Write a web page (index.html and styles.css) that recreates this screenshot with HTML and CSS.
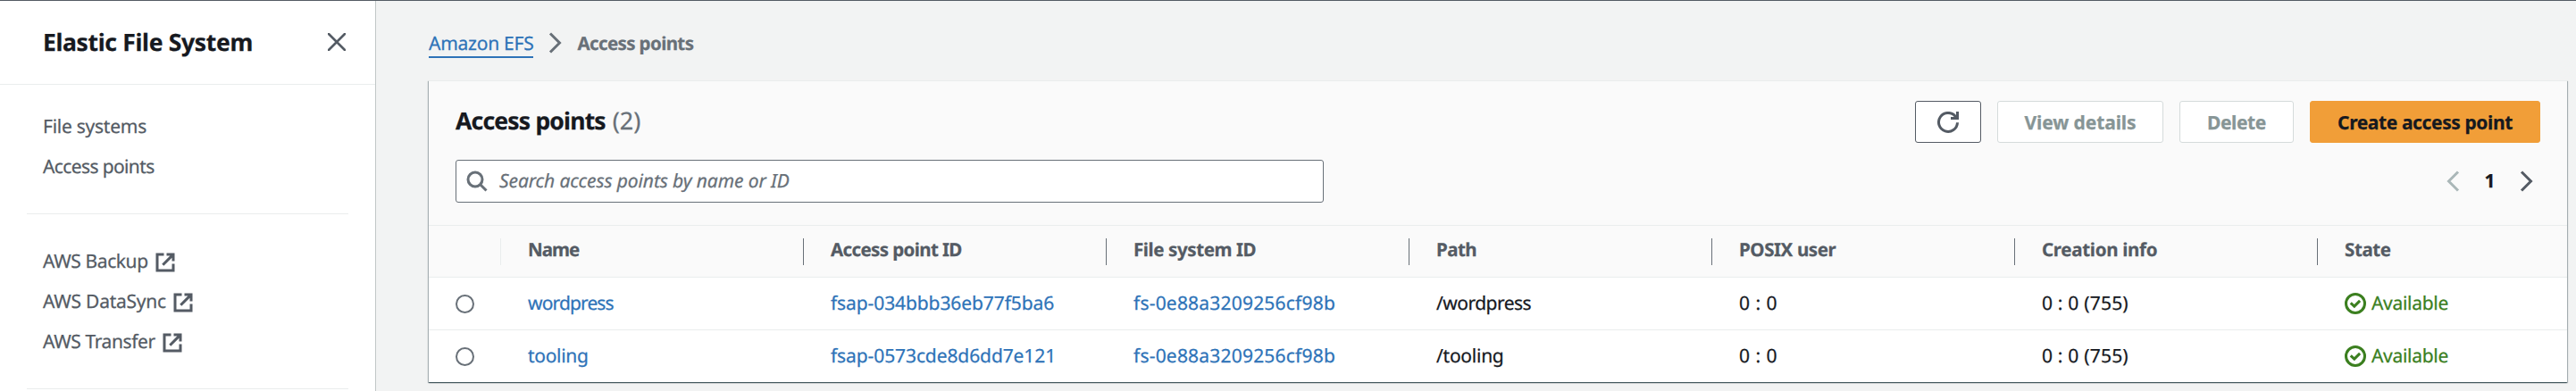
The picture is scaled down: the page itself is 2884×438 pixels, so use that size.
FILE: index.html
```
<!DOCTYPE html>
<html lang="en">
<head>
<meta charset="utf-8">
<title>Access points</title>
<link rel="stylesheet" href="styles.css">
</head>
<body>
<svg class="defs" aria-hidden="true">
  <symbol id="external" viewBox="0 0 16 16"><path d="M7 2H2v12h12V9M9 2h5v5M6.2 9.8 13.6 2.4" fill="none" stroke="currentColor" stroke-width="2"/></symbol>
  <symbol id="ok" viewBox="0 0 16 16"><circle cx="8" cy="8" r="7" fill="none" stroke="currentColor" stroke-width="2"/><path d="M4.5 7.6 7.2 10.1 11.4 5.9" fill="none" stroke="currentColor" stroke-width="2"/></symbol>
  <symbol id="chevron" viewBox="0 0 16 16"><path d="M4 1l7 7-7 7" fill="none" stroke="currentColor" stroke-width="2"/></symbol>
</svg>
<div class="app">
  <aside class="sidebar">
    <header class="side-head">
      <h2 class="side-title">Elastic File System</h2>
      <svg class="close" viewBox="0 0 20 20"><path d="M1 1l18 18M19 1L1 19" fill="none" stroke="currentColor" stroke-width="2.6" stroke-linecap="round"/></svg>
    </header>
    <nav>
      <ul class="links">
        <li><a class="n2">File systems</a></li>
        <li><a class="n6">Access points</a></li>
      </ul>
      <ul class="links ext">
        <li><a class="n4">AWS Backup</a><svg><use href="#external"/></svg></li>
        <li><a class="n2">AWS DataSync</a><svg><use href="#external"/></svg></li>
        <li><a class="n4">AWS Transfer</a><svg><use href="#external"/></svg></li>
      </ul>
    </nav>
  </aside>
  <main class="main">
    <div class="crumbs">
      <a class="n2">Amazon EFS</a>
      <svg><use href="#chevron"/></svg>
      <b class="n6">Access points</b>
    </div>
    <section class="panel">
      <div class="tools">
        <div class="row">
          <h1><span class="n8">Access points</span> <span class="count">(2)</span></h1>
          <div class="buttons">
            <button class="btn refresh" aria-label="Refresh"><svg viewBox="0 0 16 16"><path d="M15 8.2A7 7 0 1 1 13.4 3.5L15 5" fill="none" stroke="currentColor" stroke-width="2"/><path d="M15 0v5h-5" fill="none" stroke="currentColor" stroke-width="2"/></svg></button>
            <button class="btn off view n1">View details</button>
            <button class="btn off delete n4">Delete</button>
            <button class="btn primary n4">Create access point</button>
          </div>
        </div>
        <div class="row second">
          <div class="search">
            <svg viewBox="0 0 24 24"><circle cx="10" cy="10" r="8" fill="none" stroke="currentColor" stroke-width="3"/><path d="M15.5 15.5l7 7" stroke="currentColor" stroke-width="3"/></svg>
            <span class="n1">Search access points by name or ID</span>
          </div>
          <div class="pages">
            <svg class="prev"><use href="#chevron"/></svg><b>1</b><svg class="next"><use href="#chevron"/></svg>
          </div>
        </div>
      </div>
      <div class="grid head">
        <div></div><div class="n10">Name</div><div class="n6">Access point ID</div><div class="n4">File system ID</div><div class="n5">Path</div><div class="n4">POSIX user</div><div class="n3">Creation info</div><div class="n4">State</div>
      </div>
      <div class="grid body">
        <div><i class="radio"></i></div><a class="n9">wordpress</a><a class="n1">fsap-034bbb36eb77f5ba6</a><a class="p2">fs-0e88a3209256cf98b</a><div class="n5">/wordpress</div><div class="p5">0 : 0</div><div class="p2">0 : 0 (755)</div><div class="state n3"><svg><use href="#ok"/></svg>Available</div>
      </div>
      <div class="grid body">
        <div><i class="radio"></i></div><a class="n3">tooling</a><a class="n1">fsap-0573cde8d6dd7e121</a><a class="p2">fs-0e88a3209256cf98b</a><div class="n2">/tooling</div><div class="p5">0 : 0</div><div class="p2">0 : 0 (755)</div><div class="state n3"><svg><use href="#ok"/></svg>Available</div>
      </div>
    </section>
  </main>
</div>
</body>
</html>
```
FILE: styles.css
```
* { box-sizing: border-box; }
body {
  margin: 0;
  height: 438px;
  overflow: hidden;
  background: #f2f3f3;
  color: #16191f;
  font: 21px/46px "Noto Sans", sans-serif;
  text-rendering: geometricPrecision;
  -webkit-text-stroke: .25px;
}
.defs { display: none; }
h1, h2, ul { margin: 0; padding: 0; }
b, h1, h2 { font-weight: 700; }
svg { flex: none; display: block; width: 24px; height: 24px; }

/* tracking steps */
.n1 { letter-spacing: -.1px; }
.n2 { letter-spacing: -.25px; }
.n3 { letter-spacing: -.3px; }
.n4 { letter-spacing: -.4px; }
.n5 { letter-spacing: -.53px; }
.n6 { letter-spacing: -.62px; }
.n8 { letter-spacing: -.8px; }
.n9 { letter-spacing: -.86px; }
.n10 { letter-spacing: -1px; }
.p2 { letter-spacing: .2px; }
.p5 { letter-spacing: .5px; }

.app { display: grid; grid-template-columns: 421px 1fr; height: 438px; border-top: 1px solid #545b64; }

.sidebar { background: #fff; border-right: 1px solid #c1c7c7; color: #545b64; }
.side-head {
  display: flex; align-items: center; justify-content: space-between;
  height: 94px; padding: 0 33px 2px 48px; border-bottom: 1px solid #eaeded;
}
.side-title { font-size: 26.5px; letter-spacing: -.33px; color: #16191f; }
.close { width: 20px; height: 20px; }
.links { list-style: none; margin: 0 30px; padding: 25px 18px 29px; border-bottom: 1px solid #eaeded; }
.links li { display: flex; align-items: center; height: 45px; line-height: 45px; }
.ext { padding: 31px 18px 29px; }
.ext svg { margin-left: 7px; }

.main { padding: 24px 10px 0 59px; }
.crumbs { display: flex; align-items: center; height: 46px; margin-bottom: 19px; color: #687078; }
.crumbs a { color: #2e73b8; line-height: 30px; height: 31px; margin-top: 2px; border-bottom: 2px solid; }
.crumbs svg { margin: 0 12px 0 13px; }
.crumbs b { font-size: 20.5px; line-height: 46px; padding-top: 1px; }

.panel {
  height: 338px; background: #fff; border-top: 1px solid #eaeded;
  box-shadow: 0 1px 1px rgba(0,28,36,.5), 1px 1px 1px rgba(0,28,36,.25), -1px 1px 1px rgba(0,28,36,.25);
}
.tools { height: 161px; padding: 22px 30px 0; background: #fafafa; }
.row { display: flex; justify-content: space-between; height: 47px; }
h1 { font-size: 26.5px; line-height: 43px; }
.count { font-weight: 400; font-size: 27px; color: #687078; margin-left: 1px; }
.buttons { display: flex; gap: 18px; }
.btn {
  height: 47px; padding: 0; border: 1px solid #545b64; border-radius: 3px; background: #fff;
  font: 700 21px/44px "Noto Sans", sans-serif; color: #16191f;
}
.refresh { width: 74px; display: flex; align-items: center; justify-content: center; color: #545b64; }
.off { color: #879596; border-color: #d5dbdb; }
.view { width: 186px; }
.delete { width: 128px; }
.primary { width: 258px; background: #f19e38; border-color: #f19e38; }

.second { height: 48px; margin-top: 19px; }
.search {
  display: flex; align-items: center; width: 972px; padding: 0 0 1px 11px;
  border: 1px solid #687078; border-radius: 3px; background: #fff; color: #687078; font-style: italic;
}
.search svg { margin-right: 13px; }
.pages { display: flex; align-items: center; height: 48px; padding-right: 3px; }
.pages svg { color: #545b64; }
.pages .prev { transform: scaleX(-1); color: #aab7b8; }
.pages b { width: 59px; text-align: center; }

.grid {
  display: grid; grid-template-columns: 81px repeat(6, 339px) 1fr;
  height: 59px; border-top: 1px solid #eaeded; line-height: 58px;
}
.grid > * { padding-left: 30px; white-space: nowrap; }
.grid a { color: #2e73b8; }
.head { height: 58px; background: #fafafa; color: #545b64; font-size: 20.5px; font-weight: 700; align-items: center; }
.head > * { height: 30px; line-height: 27px; border-right: 1px solid #687078; }
.head > :first-child { border-color: #eaeded; }
.head > :last-child { border: 0; }
.body > :first-child { display: flex; align-items: center; padding-left: 30px; }
.radio { width: 21px; height: 21px; border: 2px solid #687078; border-radius: 50%; }
.body .state { display: flex; align-items: center; color: #3b7f1f; }
.state svg { margin-right: 6px; }
```
